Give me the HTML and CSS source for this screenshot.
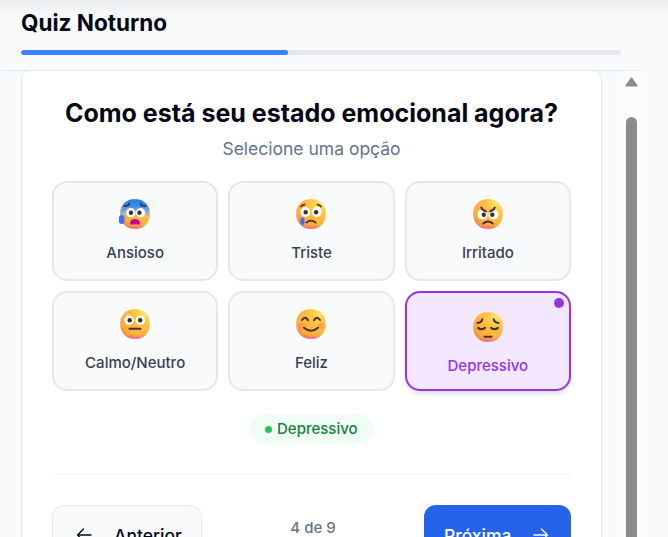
FILE: index.html
```html
<!DOCTYPE html>
<html lang="pt-BR">
<head>
<meta charset="utf-8">
<title>Quiz Noturno</title>
<link rel="stylesheet" href="styles.css">
</head>
<body>
<svg class="defs" width="0" height="0" aria-hidden="true">
  <defs>
    <radialGradient id="face" cx="0.8" cy="0.15" r="1.12">
      <stop offset="0" stop-color="#ffe566"/><stop offset="0.3" stop-color="#ffc544"/><stop offset="0.72" stop-color="#fdab38"/><stop offset="0.9" stop-color="#ee8650"/><stop offset="1" stop-color="#dd6a68"/>
    </radialGradient>
    <linearGradient id="pink" x1="0" y1="0" x2="0" y2="1">
      <stop offset="0.86" stop-color="#f25c9a" stop-opacity="0"/><stop offset="1" stop-color="#f25c9a" stop-opacity="0.8"/>
    </linearGradient>
    <linearGradient id="cold" x1="0" y1="0" x2="0" y2="1">
      <stop offset="0" stop-color="#1784ee"/><stop offset="0.24" stop-color="#3c91ed"/><stop offset="0.5" stop-color="#9cade0" stop-opacity="0.75"/><stop offset="0.6" stop-color="#b6a9d0" stop-opacity="0"/>
    </linearGradient>
    <g id="head"><rect x="0.3" y="0.3" width="29.4" height="29.4" rx="13.4" fill="url(#face)"/><rect x="0.3" y="0.3" width="29.4" height="29.4" rx="13.4" fill="url(#pink)"/></g>
  </defs>
</svg>
<header class="header">
  <h1 class="header-title">Quiz Noturno</h1>
  <div class="progress"><div class="progress-fill"></div></div>
</header>
<div class="scroller">
  <main class="card">
    <h2 class="question">Como está seu estado emocional agora?</h2>
    <p class="hint">Selecione uma opção</p>
    <div class="options">
      <button class="option">
        <svg class="emoji" viewBox="0 0 30 30"><use href="#head"/><rect x="0.3" y="0.3" width="29.4" height="29.4" rx="13.4" fill="url(#cold)"/>
          <circle cx="10.8" cy="13.7" r="4.6" fill="#fff"/><circle cx="20.5" cy="13.7" r="4.6" fill="#fff"/><circle cx="11" cy="13.7" r="2.2" fill="#402a32"/><circle cx="19.4" cy="13.7" r="2.2" fill="#402a32"/>
          <path d="M4.5 7.2Q8.5 7.2 9.5 4.5M25.5 7.2Q21.5 7.2 20.5 4.5" class="stroke"/><path d="M10 25.4Q10 20 15 20T20 25.4Z" fill="#c3008f"/><rect x="-1" y="16" width="5.4" height="9" rx="2.7" fill="#3f6df0"/></svg>
        <span>Ansioso</span>
      </button>
      <button class="option">
        <svg class="emoji" viewBox="0 0 30 30"><use href="#head"/>
          <circle cx="9.3" cy="13" r="4.9" fill="#fff"/><circle cx="20.7" cy="13" r="4.9" fill="#fff"/><circle cx="9.7" cy="13.2" r="2.2" fill="#402a32"/><circle cx="20.1" cy="13.2" r="2.2" fill="#402a32"/>
          <path d="M5 7.7Q6 5.8 8.7 5.6M25 7.7Q24 5.8 21.3 5.6M10.4 23.7Q15 19.5 19.8 23.7" class="stroke"/><path d="M4.3 20Q6.4 16.5 8.5 20V24Q8 26 6.4 26T4.3 24Z" fill="#3f6df0"/></svg>
        <span>Triste</span>
      </button>
      <button class="option">
        <svg class="emoji" viewBox="0 0 30 30"><use href="#head"/>
          <circle cx="9.5" cy="15.5" r="5" fill="#fff"/><circle cx="20.5" cy="15.5" r="5" fill="#fff"/><path d="M6 8L14 14V9H6ZM24 8L16 14V9H24Z" fill="#ffb742"/><circle cx="10.8" cy="15.8" r="2.2" fill="#402a32"/><circle cx="19.3" cy="15.8" r="2.2" fill="#402a32"/>
          <path d="M8.3 8.5Q9.4 11.8 12.8 12.2M21.7 8.5Q20.6 11.8 17.2 12.2M10.4 24.5Q15 20.5 19.6 24.5" class="stroke thick"/></svg>
        <span>Irritado</span>
      </button>
      <button class="option">
        <svg class="emoji" viewBox="0 0 30 30"><use href="#head"/>
          <circle cx="9" cy="11.3" r="4.7" fill="#fff"/><circle cx="20.3" cy="11.3" r="4.7" fill="#fff"/><circle cx="9.7" cy="11.3" r="2.2" fill="#402a32"/><circle cx="20.2" cy="11.3" r="2.2" fill="#402a32"/>
          <path d="M9.5 19.8H20.5" class="stroke thick"/></svg>
        <span>Calmo/Neutro</span>
      </button>
      <button class="option">
        <svg class="emoji" viewBox="0 0 30 30"><use href="#head"/>
          <circle cx="5.5" cy="16.7" r="3.2" fill="#fa8460" opacity="0.5"/><circle cx="25.3" cy="16.7" r="3.2" fill="#fa8460" opacity="0.5"/>
          <path d="M6 11Q9.3 6.3 12 11.2M18 11.2Q20.7 6.3 24 11M8 18.7Q15 24.7 22 18.7" class="stroke thick"/></svg>
        <span>Feliz</span>
      </button>
      <button class="option selected">
        <svg class="emoji" viewBox="0 0 30 30"><use href="#head"/>
          <path d="M4.5 11Q8.5 10.5 9.3 7.2M25.5 11Q21.5 10.5 20.7 7.2M5 15.9Q8.5 18.7 12 15.9M18 15.9Q21.5 18.7 25 15.9M11.5 24.7H18.5" class="stroke thick"/></svg>
        <span>Depressivo</span>
        <i class="marker"></i>
      </button>
    </div>
    <div class="chip"><i class="chip-dot"></i>Depressivo</div>
    <footer class="nav">
      <button class="btn btn-prev"><svg class="arrow" viewBox="0 0 16 16"><path d="M15 8H1.5M7.5 2L1.5 8L7.5 14"/></svg>Anterior</button>
      <span class="step">4 de 9</span>
      <button class="btn btn-next">Próxima<svg class="arrow" viewBox="0 0 16 16"><path d="M1 8H14.5M8.5 2L14.5 8L8.5 14"/></svg></button>
    </footer>
  </main>
  <div class="scrollbar"><svg class="scroll-up" viewBox="0 0 13 10"><path d="M6.5 1.2L11.8 8.8H1.2Z"/></svg><div class="thumb"></div></div>
</div>
</body>
</html>
```
FILE: styles.css
```css
* { box-sizing: border-box; }
body {
  margin: 0;
  height: 537px;
  overflow: hidden;
  display: flex;
  flex-direction: column;
  font-family: Inter, "Liberation Sans", sans-serif;
  color: #020817;
  background: linear-gradient(#e9eaec 0, #f3f4f6 9px, #f9fafc 23px, #f9fafc 100%);
}
h1, h2, p { margin: 0; }
button { font: inherit; color: inherit; }
.defs { position: absolute; }
.header {
  flex: none;
  width: 640px;
  height: 71px;
  margin-left: 1px;
  padding: 8px 20px 0;
  border-bottom: 1px solid #e2e8f0;
}
.header-title { font-size: 22.5px; line-height: 30px; font-weight: 650; }
.progress { height: 5px; margin-top: 12px; border-radius: 3px; background: #e5e7eb; overflow: hidden; }
.progress-fill { width: 267px; height: 100%; border-radius: 3px; background: #3b82f6; }
.scroller { flex: 1; min-height: 0; width: 640px; margin-left: 1px; display: flex; overflow: hidden; }
.card {
  flex: none;
  width: 581px;
  height: 620px;
  margin: -3px 0 0 20px;
  padding: 29px 30px 0;
  background: #fff;
  border: 1px solid #e2e8f0;
  border-radius: 12px;
  box-shadow: 0 1px 2px rgba(0,0,0,.05);
  text-align: center;
}
.question { font-size: 25px; line-height: 30px; font-weight: 650; white-space: nowrap; }
.hint { margin-top: 7px; font-size: 17.5px; line-height: 28px; color: #64748b; }
.options { display: grid; grid-template-columns: repeat(3, 1fr); grid-auto-rows: 100px; gap: 10px; margin-top: 18px; }
.option {
  position: relative;
  display: flex;
  flex-direction: column;
  align-items: center;
  padding: 16px 0 0;
  border: 2px solid #e5e7eb;
  border-radius: 15px;
  background: #f9fafc;
  color: #374151;
  font-size: 15px;
  line-height: 22px;
  font-weight: 500;
}
.emoji { width: 30px; height: 30px; margin-bottom: 13px; overflow: visible; flex: none; }
.stroke { fill: none; stroke: #4b2d3b; stroke-width: 1.7; stroke-linecap: round; stroke-linejoin: round; }
.thick { stroke-width: 2; }
.selected { padding-top: 19px; border-color: #9333ea; background: #f3e8ff; color: #9333ea; box-shadow: 0 4px 6px -1px rgba(0,0,0,.1), 0 2px 4px -2px rgba(0,0,0,.1); }
.marker { position: absolute; top: 5px; right: 5px; width: 10px; height: 10px; border-radius: 50%; background: #9333ea; }
.chip {
  display: flex;
  align-items: center;
  gap: 5px;
  width: 123px;
  height: 30px;
  margin: 23px auto 0;
  padding: 0 0 1px 15px;
  border-radius: 15px;
  background: #f0fdf4;
  color: #15803d;
  font-size: 15px;
  font-weight: 500;
}
.chip-dot { width: 7px; height: 7px; margin-top: 1px; border-radius: 50%; background: #22c55e; }
.nav { display: flex; justify-content: space-between; margin-top: 30px; padding-top: 30px; border-top: 1px solid #f3f4f6; }
.btn { display: flex; align-items: center; height: 60px; border-radius: 12px; font-size: 17.5px; font-weight: 500; }
.btn-prev { width: 150px; padding: 0 0 0 23px; gap: 22px; border: 1px solid #e2e8f0; background: #f9fafc; }
.btn-next { width: 147px; padding: 0 0 0 20px; gap: 21px; border: 0; background: #2563eb; color: #fff; }
.arrow { flex: none; width: 16px; height: 16px; fill: none; stroke: currentColor; stroke-width: 1.3; stroke-linecap: round; stroke-linejoin: round; }
.step { margin-top: 12px; font-size: 15px; line-height: 22px; font-weight: 500; color: #64748b; }
.scrollbar { width: 19px; margin-left: auto; background: #fcfcfc; display: flex; flex-direction: column; align-items: center; }
.scroll-up { flex: none; width: 13px; height: 10px; margin-top: 6px; fill: #8b8b8b; stroke: #8b8b8b; stroke-width: 1.5; stroke-linejoin: round; }
.thumb { width: 11px; flex: 1; margin-top: 30px; border-radius: 6px 6px 0 0; background: #8b8b8b; }
```
